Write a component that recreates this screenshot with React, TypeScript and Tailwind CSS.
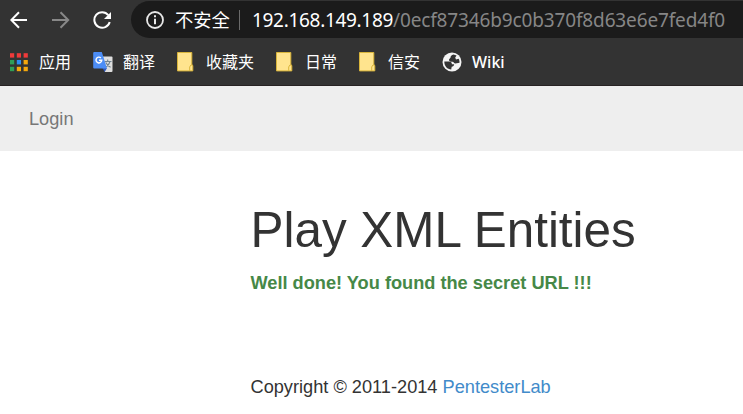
import type { ReactNode } from "react";

const tiles = ["#f03a3a", "#f03a3a", "#f03a3a", "#2f9e57", "#2b8cf0", "#f5a80c", "#2f9e57", "#f5a80c", "#f5a80c"];

function AppsIcon() {
  return (
    <svg width="18" height="19" viewBox="0 0 18 19" className="block">
      {tiles.map((fill, i) => (
        <rect key={i} x={(i % 3) * 6.8} y={Math.floor(i / 3) * 6.8 + 0.2} width="4.2" height="4.4" fill={fill} />
      ))}
    </svg>
  );
}

function TranslateIcon() {
  return (
    <svg width="20" height="21" viewBox="0 0 20 21" className="block">
      <path d="M8 4.5h10.5a1 1 0 0 1 1 1v13.4a1 1 0 0 1-1 1H12z" fill="#dedede" />
      <path d="M11.5 9.5h7M14.7 7.5v2M17 9.5c-.6 2.5-2.3 4.4-4.2 5.5M12.8 10.5c.9 2 2.6 3.6 4.8 4.7" fill="none" stroke="#70828f" strokeWidth="1.1" />
      <path d="M9.5 16h4.5l-2.3 4z" fill="#3058bb" />
      <path d="M1.2 0h7.6L14 16.5H1.2a1 1 0 0 1-1-1V1a1 1 0 0 1 1-1z" fill="#4c8df6" />
      <path d="M7.9 5.9A2.9 2.9 0 1 0 8.8 8.3H6" fill="none" stroke="#fff" strokeWidth="1.4" />
    </svg>
  );
}

function FolderIcon() {
  return (
    <svg width="17" height="20" viewBox="0 0 17 20" className="block">
      <path d="M.5.5h14.3v12.2l1 .8v5.4H.5z" fill="#ffe48e" stroke="#d9b53b" />
      <path d="M15.5 13h-1.6l-1.2 2v3.8" fill="none" stroke="#d9b53b" />
    </svg>
  );
}

function GlobeIcon() {
  return (
    <svg width="20" height="20" viewBox="0 0 20 20" className="block">
      <circle cx="10" cy="10" r="9.5" fill="#f4f4f4" />
      <path d="M11.5 2.4C9.5 3 8.4 4 8.6 5.6L7 7.4c0 2 1.4 2.4 3.4 2.3 1.6 0 1.5 1.8 3 1.9l4.1-.9c.2-1.4-.2-2.9-.8-4l-2.7.7-.8-1.8 1.4-2z" fill="#333" />
      <path d="M2.3 9.6h4.8c1.7.1 2.8 1 2.8 2.7h2.3c-.2 1.8-1.1 2.3-2.5 2.4l-.5 2.9c-3.9-.1-6.9-3.3-6.9-8z" fill="#333" />
    </svg>
  );
}

function Bookmark({ icon, label, className }: { icon: ReactNode; label: string; className: string }) {
  return (
    <div className={`flex shrink-0 items-center ${className}`}>
      {icon}
      <span className="whitespace-nowrap">{label}</span>
    </div>
  );
}

export default function App() {
  return (
    <div className="h-[414px] w-[743px] overflow-hidden bg-white font-['Liberation_Sans',Arial,sans-serif] text-[18.2px] text-[#333]">
      <header className="h-[86px] border-b border-[#272223] bg-[#333] font-['Noto_Sans','Noto_Sans_CJK_SC',sans-serif] text-white">
        <div className="flex h-[39px] pt-px">
          <div className="flex w-[131px] shrink-0 items-center pl-[10px]">
            <svg width="102" height="18" viewBox="0 0 102 18" fill="none" strokeWidth="2">
              <path d="M17 9H1.5M9 1.2 1.3 9 9 16.8" stroke="#fff" />
              <path d="M42 9h16M50.5 1.2 58.2 9l-7.7 7.8" stroke="#888" />
              <path d="M98.3 4.1A7.8 7.8 0 1 0 99.7 11" stroke="#fff" />
              <path d="M101 1v7h-7z" fill="#fff" />
            </svg>
          </div>
          <div className="flex h-[37px] flex-1 items-center rounded-l-full bg-[#1b1b1b] pl-[15px]">
            <svg width="18" height="18" viewBox="0 0 18 18" className="shrink-0">
              <circle cx="9" cy="9" r="8" fill="none" stroke="#e8e8e8" strokeWidth="1.8" />
              <path d="M9 4.3v2M9 7.8v5.5" stroke="#e8e8e8" strokeWidth="2" />
            </svg>
            <span className="relative -top-px ml-[11px] w-[55px] shrink-0 whitespace-nowrap font-['Noto_Sans_CJK_SC',sans-serif] text-[18.3px] leading-[26px]">不安全</span>
            <span className="ml-[9px] h-[20px] w-px shrink-0 bg-[#6b6b6b]" />
            <span className="ml-[12px] flex whitespace-nowrap text-[19px] leading-[26px]">
              <span className="w-[141px] tracking-[-0.31px]">192.168.149.189</span>
              <span className="tracking-[-0.14px] text-[#868686]">/0ecf87346b9c0b370f8d63e6e7fed4f0</span>
            </span>
          </div>
        </div>
        <nav className="flex h-[46px] items-center pl-[10px] text-[16px] leading-[24px]">
          <Bookmark className="w-[83px] gap-[11px]" icon={<AppsIcon />} label="应用" />
          <Bookmark className="w-[84px] gap-[10px]" icon={<TranslateIcon />} label="翻译" />
          <Bookmark className="w-[99px] gap-[12px]" icon={<FolderIcon />} label="收藏夹" />
          <Bookmark className="w-[83px] gap-[12px]" icon={<FolderIcon />} label="日常" />
          <Bookmark className="w-[83px] gap-[12px]" icon={<FolderIcon />} label="信安" />
          <Bookmark className="gap-[10px] font-medium" icon={<GlobeIcon />} label="Wiki" />
        </nav>
      </header>
      <div className="flex h-[65px] items-center bg-[#eee] pt-[2px] pl-[29px] text-[#777]">Login</div>
      <main className="pl-[250.5px]">
        <h1 className="pt-[52px] text-[49.4px] leading-[54px] whitespace-nowrap">Play XML Entities</h1>
        <p className="pt-[13px] leading-[26px] font-bold text-[#468847]">Well done! You found the secret URL !!!</p>
        <footer className="pt-[78px] leading-[26px]">
          Copyright © 2011-2014 <a className="text-[#428bca]">PentesterLab</a>
        </footer>
      </main>
    </div>
  );
}
